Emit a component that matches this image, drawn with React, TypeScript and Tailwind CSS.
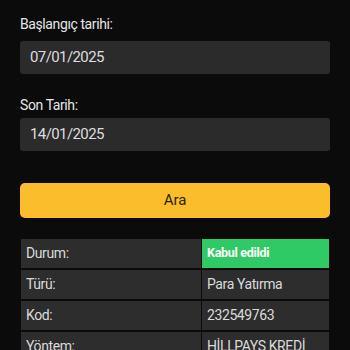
import React from "react";

const rows: { k: string; v: string; ok?: boolean }[] = [
  { k: "Durum:", v: "Kabul edildi", ok: true },
  { k: "Türü:", v: "Para Yatırma" },
  { k: "Kod:", v: "232549763" },
  { k: "Yöntem:", v: "HİLLPAYS KREDİ" },
];

export default function App() {
  return (
    <div className="w-[350px] h-[350px] overflow-hidden bg-[#0b0b0b] text-[#e6e6e6] [font-family:Roboto,'Noto_Sans',sans-serif]">
      <div className="px-[20px] pt-[14px]">
        <div className="text-[14px] tracking-[-0.4px] leading-[20px] h-[20px]">Başlangıç tarihi:</div>
        <div className="mt-[7px] h-[33px] rounded-[3px] bg-[#2b2b2b] px-[10px] flex items-center text-[15px] tracking-[-0.6px] text-[#dedede]">
          07/01/2025
        </div>
        <div className="mt-[21px] text-[14px] tracking-[-0.4px] leading-[20px] h-[20px]">Son Tarih:</div>
        <div className="mt-[3px] h-[33px] rounded-[3px] bg-[#2b2b2b] px-[10px] flex items-center text-[15px] tracking-[-0.6px] text-[#dedede]">
          14/01/2025
        </div>
        <button className="mt-[32px] w-full h-[35px] rounded-[5px] bg-[#fbbd2b] text-[#2a1f00] text-[15px] flex items-center justify-center">
          Ara
        </button>
        <div className="mt-[21px] ml-[1px] grid grid-cols-[180px_127px] gap-x-[1px] gap-y-[2px]">
          {rows.map((r) => (
            <React.Fragment key={r.k}>
              <div className="h-[29px] bg-[#2d2d2d] px-[5px] flex items-center text-[14px] tracking-[-0.4px] text-[#dadada]">{r.k}</div>
              <div
                className={
                  r.ok
                    ? "h-[29px] bg-[#2fca65] px-[5px] flex items-center text-[12.5px] tracking-[-0.3px] font-bold text-white"
                    : "h-[29px] bg-[#2d2d2d] px-[5px] flex items-center text-[14px] tracking-[-0.4px] text-[#dadada] whitespace-nowrap overflow-hidden"
                }
              >
                {r.v}
              </div>
            </React.Fragment>
          ))}
        </div>
      </div>
    </div>
  );
}
